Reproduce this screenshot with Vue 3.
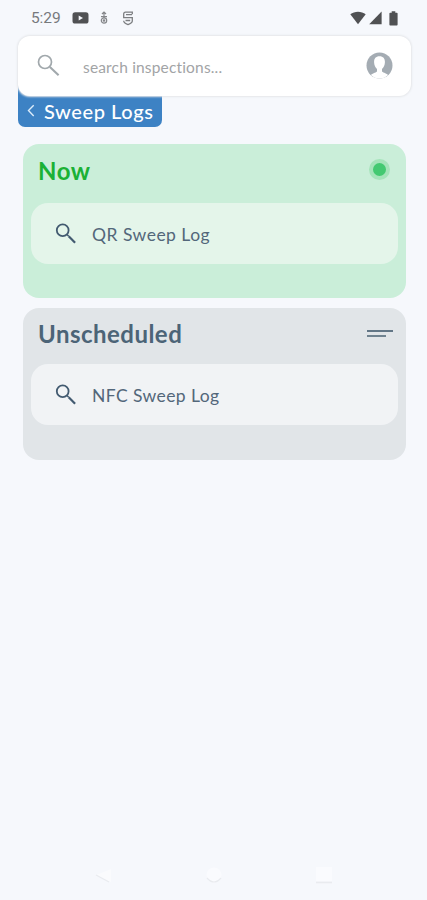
<script setup>
const groups = [
  { key: 'now', title: 'Now', item: 'QR Sweep Log' },
  { key: 'unscheduled', title: 'Unscheduled', item: 'NFC Sweep Log' }
]
</script>

<template>
  <main class="screen">
    <header class="status">
      <span class="time">5:29</span>
      <svg class="video" width="17" height="12" viewBox="0 0 17 12">
        <rect x=".5" y=".3" width="16" height="11.2" rx="2.6" fill="#505153" />
        <path d="M6.7 3.4 11 5.9 6.7 8.4Z" fill="#f5f7fb" />
      </svg>
      <svg class="anchor" width="10" height="14" viewBox="0 0 10 14" fill="none" stroke="#85878a" stroke-width="1.2">
        <path d="M5 1v6M3 3 5 1l2 2M2 5.700h6" />
        <circle cx="5" cy="9.500" r="2.700" />
        <circle cx="5" cy="9.500" r=".7" fill="#85878a" />
      </svg>
      <svg class="shield" width="12" height="15" viewBox="0 0 12 15" fill="none" stroke="#7c7e81" stroke-width="1.300">
        <path d="M10.300 3.200V1.200H3.500Q1.700 1.200 1.700 3v3.700h8.600V10c0 1.800-1.500 2.600-4.300 3.600C3.200 12.600 1.700 11.800 1.700 9.700M4 3.700h6M3.500 9.500h4.700" />
      </svg>
      <div class="signals">
        <svg width="16" height="14" viewBox="0 0 16 14"><path d="M.3 3.300C4.500-.2 11.500-.2 15.700 3.300L8 13.200Z" fill="#505153" /></svg>
        <svg width="13" height="14" viewBox="0 0 13 14"><path d="M12.600.5v12.700H.2Z" fill="#505153" /></svg>
        <svg class="battery" width="9" height="15" viewBox="0 0 9 15"><path d="M2.700.3h3.600v1.500h1.500q.8 0 .8.800v11q0 .9-.8.900H1.200q-.8 0-.8-.9v-11q0-.8.800-.8h1.500Z" fill="#505153" /></svg>
      </div>
    </header>

    <section class="search">
      <svg class="glass" width="23" height="23" viewBox="0 0 23 23" fill="none" stroke="#a1a8ac">
        <circle cx="8" cy="8" r="6.500" stroke-width="1.700" />
        <path d="m12.900 12.900 8.700 8.300" stroke-width="2.100" />
      </svg>
      <span class="placeholder">search inspections...</span>
      <svg class="avatar" width="27" height="27" viewBox="0 0 27 27">
        <circle cx="13.500" cy="13.500" r="13" fill="#a4acb3" />
        <path d="M13.500 4.200c-4 0-5.600 2.600-5.400 6.200.1 2.900 1.300 5.200 2.900 6.500v2.300c-.2 1.300-3.900 1.500-6.100 3.700a12.200 12.200 0 0 0 17.200 0c-2.200-2.200-5.900-2.400-6.100-3.700v-2.300c1.600-1.300 2.800-3.600 2.900-6.500.2-3.600-1.400-6.200-5.400-6.200Z" fill="#fff" />
      </svg>
    </section>

    <nav class="crumb">
      <svg width="8" height="14" viewBox="0 0 8 14"><path d="M6.700 1.200 1.500 6.600l5.200 5.400" fill="none" stroke="#dcecfa" stroke-width="1.400" /></svg>
      <span>Sweep Logs</span>
    </nav>

    <section v-for="g in groups" :key="g.key" class="group" :class="g.key">
      <div class="heading">
        <h2>{{ g.title }}</h2>
        <i v-if="g.key === 'now'" class="dot"></i>
        <i v-else class="lines"></i>
      </div>
      <div class="item">
        <svg width="22" height="22" viewBox="0 0 22 22" fill="none" stroke="#425a70">
          <circle cx="7.700" cy="7.200" r="5.900" stroke-width="1.800" />
          <path d="m11.900 11.500 1.700 1.600" stroke-width="1.500" />
          <path d="m13.700 13.300 6.400 6.500" stroke-width="2.200" />
        </svg>
        <span>{{ g.item }}</span>
      </div>
    </section>

    <footer class="system">
      <svg width="20" height="18" viewBox="0 0 20 18"><path d="M17 2v13L2 8Z" fill="#fafbfd" /><path d="m2 8 13 7" stroke="#e9ebef" stroke-width="1.200" /></svg>
      <svg width="20" height="18" viewBox="0 0 20 18"><circle cx="10" cy="8" r="7.500" fill="#fafbfe" /><path d="M3 11q7 8 14 0" fill="none" stroke="#e9ebef" stroke-width="1.200" /></svg>
      <svg width="20" height="18" viewBox="0 0 20 18"><path d="M2 0h16v14H2Z" fill="#fafbfe" /><path d="M2 15.500h16" stroke="#e9ebef" stroke-width="1.500" /></svg>
    </footer>
  </main>
</template>

<style>
body { margin: 0; background: #f6f8fc; }
</style>

<style scoped>
.screen { box-sizing: border-box; width: 427px; height: 900px; display: flex; flex-direction: column; background: #f6f8fc; font-family: Lato, sans-serif; overflow: hidden; }
.status { box-sizing: border-box; height: 36px; flex: none; padding-left: 31px; display: flex; align-items: center; }
.time { width: 41px; font: 15.500px Roboto, sans-serif; color: #77797c; letter-spacing: -.1px; }
.anchor { margin-left: 10px; }
.shield { margin-left: 13px; }
.signals { margin-left: auto; padding-right: 29px; display: flex; align-items: center; gap: 3px; }
.battery { margin-left: 4px; }
.search { box-sizing: border-box; position: relative; z-index: 1; flex: none; width: 393px; height: 60px; margin-left: 18px; padding: 0 18px 0 19px; display: flex; align-items: center; background: #fff; border-radius: 12px; box-shadow: 0 0 2px 1px #e5e7ea; }
.glass { margin-bottom: 2px; }
.placeholder { margin-left: 23px; padding-top: 1px; color: #a2a4a6; font-size: 15.500px; letter-spacing: .17px; }
.avatar { margin: 0 0 1px auto; }
.crumb { box-sizing: border-box; flex: none; width: 144px; height: 42px; margin: -11px 0 0 18px; padding: 9px 0 0 9px; display: flex; align-items: center; gap: 9px; background: #3d82c4; border-radius: 0 0 7px 7px; color: #fff; font-size: 20px; font-weight: 500; letter-spacing: .57px; white-space: nowrap; }
.group { box-sizing: border-box; flex: none; width: 383px; margin-left: 23px; padding: 0 8px; border-radius: 16px; }
.now { height: 154px; margin-top: 17px; background: #caeed9; }
.unscheduled { height: 152px; margin-top: 10px; background: #e1e5e8; }
.heading { height: 59px; padding: 0 5px 5px 7px; box-sizing: border-box; display: flex; align-items: center; justify-content: space-between; }
.unscheduled .heading { height: 56px; padding-bottom: 3px; }
h2 { margin: 0; padding-bottom: 1px; font-size: 24px; line-height: 30px; font-weight: 700; letter-spacing: .48px; }
.now h2 { color: #1bb135; letter-spacing: .55px; }
.unscheduled h2 { color: #4c6477; }
.dot { box-sizing: border-box; width: 21px; height: 21px; margin: 0 3px 3px 0; border: 4px solid #a5e4ba; border-radius: 50%; background: #43c971; }
.lines { box-sizing: border-box; width: 26px; height: 7px; margin-bottom: 2px; border-top: 2px solid #627686; display: flex; align-items: flex-end; }
.lines::after { content: ''; width: 19px; height: 2px; background: #708390; }
.item { box-sizing: border-box; height: 61px; padding-left: 24px; display: flex; align-items: center; border-radius: 17px; background: #e4f5ea; color: #53677a; font-size: 17.500px; letter-spacing: .48px; }
.unscheduled .item { background: #f1f3f5; letter-spacing: .4px; }
.item span { margin-left: 15px; padding-top: 1px; }
.system { margin-top: auto; padding: 0 93px 15px 94px; display: flex; justify-content: space-between; }
</style>
